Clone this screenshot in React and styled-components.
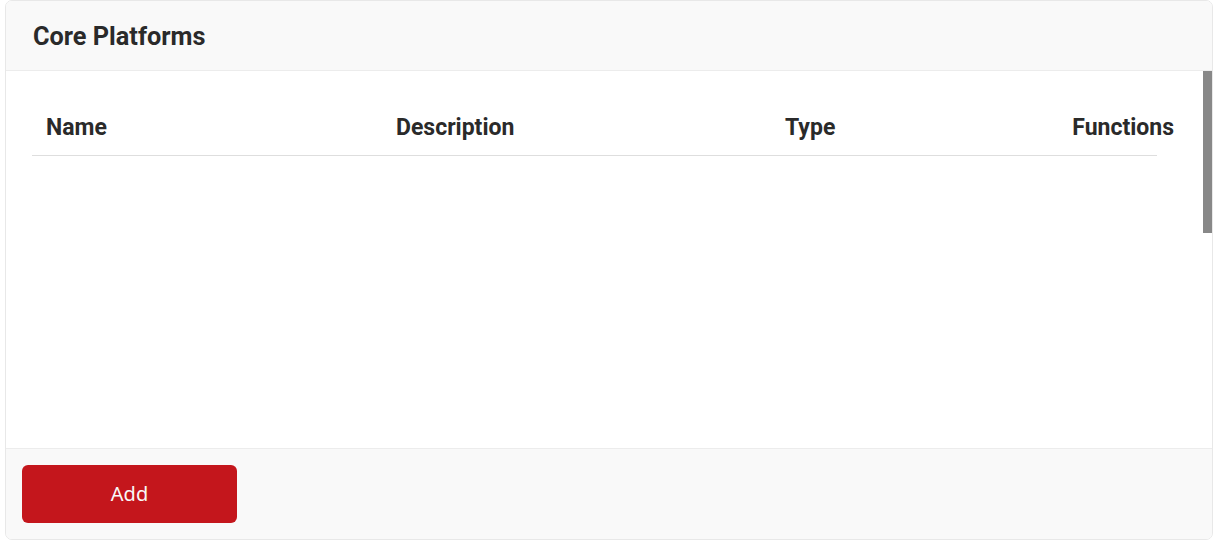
import React from "react";
import { styled, createGlobalStyle } from "styled-components";

const GlobalStyle = createGlobalStyle`
  *, *::before, *::after {
    box-sizing: border-box;
  }
  html, body {
    margin: 0;
    padding: 0;
    background: #ffffff;
    font-family: Roboto, "Liberation Sans", sans-serif;
  }
`;

const Page = styled.div`
  padding: 0 3px 0 5px;
`;

const Card = styled.div`
  height: 540px;
  display: flex;
  flex-direction: column;
  border: 1px solid #e8e8e8;
  border-radius: 7px;
  background: #ffffff;
  overflow: hidden;
`;

const Header = styled.div`
  height: 70px;
  flex-shrink: 0;
  display: flex;
  align-items: center;
  padding: 2px 27px 0;
  background: #f9f9f9;
  border-bottom: 1px solid #ececec;
`;

const Title = styled.h2`
  margin: 0;
  font-size: 25.3px;
  font-weight: 700;
  color: #2a2a2a;
`;

const Body = styled.div`
  position: relative;
  flex: 1;
  overflow: hidden;
  padding: 27px 0 0 26px;
`;

const ScrollThumb = styled.div`
  position: absolute;
  top: 0;
  right: 0;
  width: 9px;
  height: 162px;
  background: #888888;
`;

const Table = styled.div`
  width: 1156px;
`;

const HeadRow = styled.div`
  position: relative;
  display: grid;
  grid-template-columns: 350px 389px 1fr auto;
  align-items: center;
  height: 58px;

  &::after {
    content: "";
    position: absolute;
    left: 0;
    right: 31px;
    bottom: 0;
    height: 1px;
    background: #dedede;
  }
`;

const HeadCell = styled.div`
  padding: 0 14px;
  font-size: 23px;
  font-weight: 700;
  color: #2a2a2a;
  text-align: ${(p) => (p.$right ? "right" : "left")};
`;

const Footer = styled.div`
  flex-shrink: 0;
  display: flex;
  align-items: center;
  padding: 16px 16px;
  background: #f9f9f9;
  border-top: 1px solid #ececec;
`;

const Button = styled.button`
  width: 215px;
  height: 58px;
  padding: 0 0 2px;
  border: none;
  border-radius: 6px;
  background: #c4161c;
  color: #f8f8f8;
  font-family: "Noto Sans", "Open Sans", sans-serif;
  font-size: 20px;
  font-weight: 400;
  cursor: pointer;
`;

const columns = ["Name", "Description", "Type", "Functions"];

const App = () => {
  return (
    <Page>
      <GlobalStyle />
      <Card>
        <Header>
          <Title>Core Platforms</Title>
        </Header>
        <Body>
          <Table>
            <HeadRow>
              {columns.map((c, i) => (
                <HeadCell key={c} $right={i === columns.length - 1}>
                  {c}
                </HeadCell>
              ))}
            </HeadRow>
          </Table>
          <ScrollThumb />
        </Body>
        <Footer>
          <Button>Add</Button>
        </Footer>
      </Card>
    </Page>
  );
};

export default App;
